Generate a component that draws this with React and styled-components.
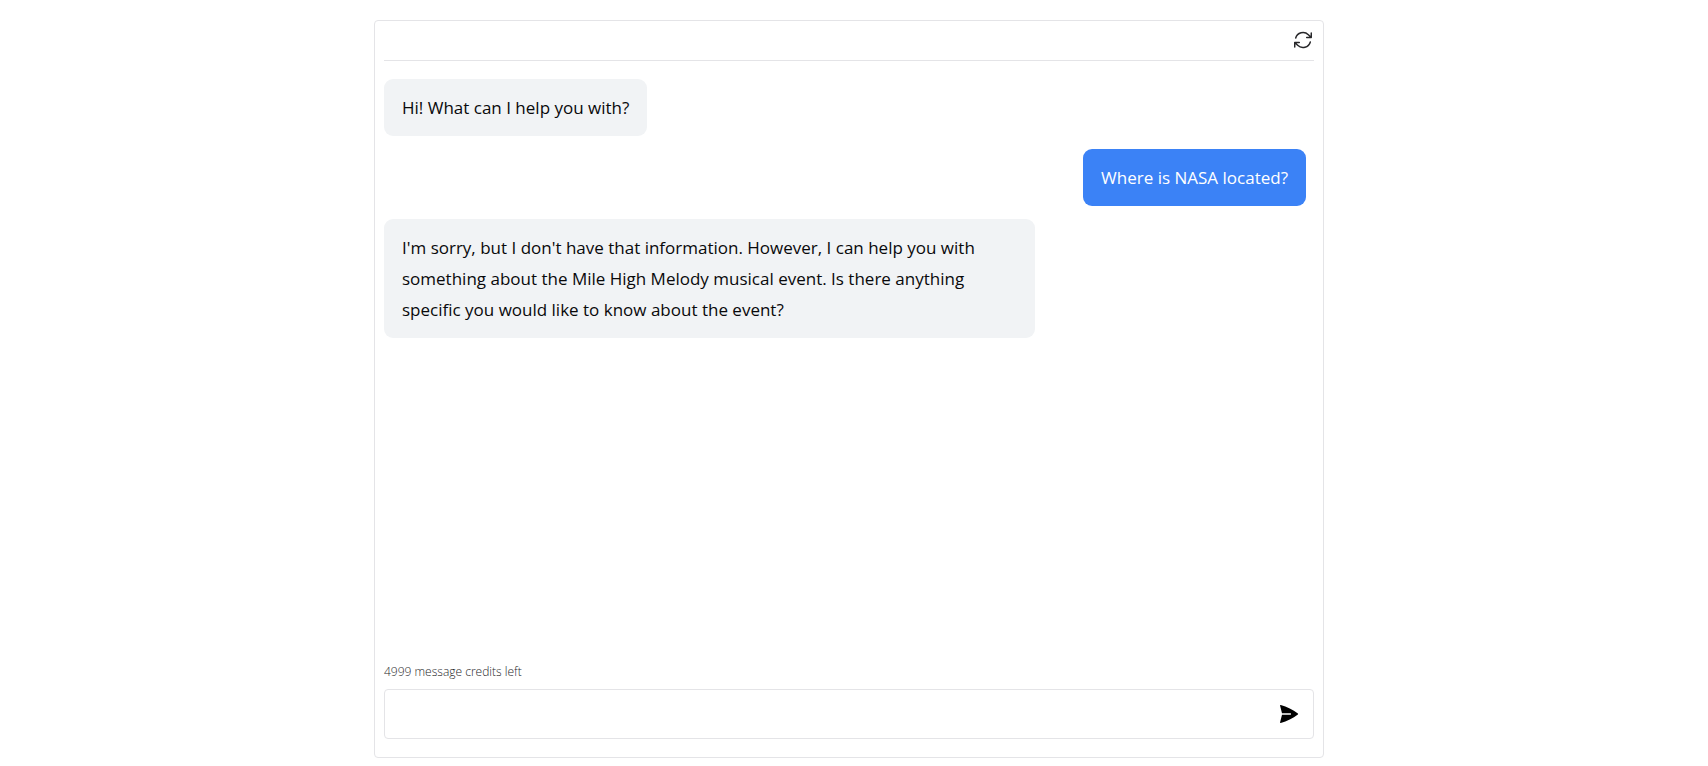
import React, { useState } from 'react';
import styled, { createGlobalStyle } from 'styled-components';


const GREETING = { from: 'bot', text: 'Hi! What can I help you with?' };

const Chat = () => {
  const [draft, setDraft] = useState('');
  const [credits, setCredits] = useState(4999);
  const [messages, setMessages] = useState([
    GREETING,
    { from: 'user', text: 'Where is NASA located?' },
    {
      from: 'bot',
      text: "I'm sorry, but I don't have that information. However, I can help you with something about the Mile High Melody musical event. Is there anything specific you would like to know about the event?",
    },
  ]);

  function handleSubmit(e) {
    e.preventDefault();
    if (!draft.trim()) return;
    setMessages([...messages, { from: 'user', text: draft }]);
    setCredits(credits - 1);
    setDraft('');
  }

  return (
    <Page>
      <GlobalStyle />
      <Card>
        <Header>
          <IconButton type="button" aria-label="Reset chat" onClick={() => setMessages([GREETING])}>
            <RefreshIcon />
          </IconButton>
        </Header>
        <Messages>
          {messages.map((message, i) => (
            <Bubble key={i} $user={message.from === 'user'}>{message.text}</Bubble>
          ))}
        </Messages>
        <Credits>{credits} message credits left</Credits>
        <Composer onSubmit={handleSubmit}>
          <MessageInput
            aria-label="Message"
            value={draft}
            onChange={(e) => setDraft(e.target.value)}
          />
          <IconButton type="submit" aria-label="Send message">
            <SendIcon />
          </IconButton>
        </Composer>
      </Card>
    </Page>
  );
};

const RefreshIcon = () => (
  <svg width="22" height="22" viewBox="0 0 24 24" fill="none" stroke="#27272a" strokeWidth="1.6" strokeLinecap="round" strokeLinejoin="round">
    <path d="M16.023 9.348h4.992v-.001M2.985 19.644v-4.992m0 0h4.992m-4.993 0 3.181 3.183a8.25 8.25 0 0 0 13.803-3.7M4.031 9.865a8.25 8.25 0 0 1 13.803-3.7l3.181 3.182m0-4.991v4.99" />
  </svg>
);

const SendIcon = () => (
  <svg width="24" height="24" viewBox="0 0 24 24" fill="#000000">
    <path d="M3.7 3.1a.5.5 0 0 0-.6.6L5 11.3h8.4a.7.7 0 0 1 0 1.4H5l-1.9 7.6a.5.5 0 0 0 .6.6C10 19 15.800 16.200 20.900 12.400a.5.5 0 0 0 0-.8C15.800 7.800 10 5 3.700 3.100Z" />
  </svg>
);

const GlobalStyle = createGlobalStyle`
  * {
    box-sizing: border-box;
  }
  body {
    margin: 0;
    background-color: #ffffff;
    color: #09090b;
    font-family: "Segoe UI", "Open Sans", "Noto Sans", sans-serif;
  }
`;

const Page = styled.main`
  display: flex;
  justify-content: center;
  min-height: 100vh;
  padding: 20px 20px 8px 10px;
`;

const Card = styled.section`
  display: flex;
  flex-direction: column;
  width: 100%;
  max-width: 950px;
  padding: 0 9px 18px;
  border: 1px solid #e4e4e7;
  border-radius: 4px;
`;

const Header = styled.header`
  display: flex;
  justify-content: flex-end;
  padding: 8px 0 9px;
  border-bottom: 1px solid #e4e4e7;
`;

const IconButton = styled.button`
  display: flex;
  align-items: center;
  justify-content: center;
  padding: 0;
  border: none;
  background: none;
  cursor: pointer;
`;

const Messages = styled.div`
  display: flex;
  flex-direction: column;
  flex: 1;
  gap: 13px;
  padding-top: 18px;
`;

const Bubble = styled.div`
  align-self: ${({ $user }) => ($user ? 'flex-end' : 'flex-start')};
  max-width: 70%;
  margin-right: ${({ $user }) => ($user ? '8px' : '0')};
  padding: 13px 18px;
  border-radius: 9px;
  background-color: ${({ $user }) => ($user ? '#3b82f6' : '#f1f3f5')};
  color: ${({ $user }) => ($user ? '#ffffff' : '#09090b')};
  font-size: 17px;
  line-height: 31px;
`;

const Credits = styled.p`
  margin: 0 0 7px;
  color: #27272a;
  font-size: 12px;
  font-weight: 300;
  line-height: 20px;
`;

const Composer = styled.form`
  display: flex;
  align-items: center;
  height: 50px;
  padding: 0 12px;
  border: 1px solid #e4e4e7;
  border-radius: 4px;
`;

const MessageInput = styled.input`
  flex: 1;
  min-width: 0;
  height: 100%;
  padding: 0;
  border: none;
  outline: none;
  background: none;
  color: inherit;
  font-family: inherit;
  font-size: 17px;
`;


export default Chat;
